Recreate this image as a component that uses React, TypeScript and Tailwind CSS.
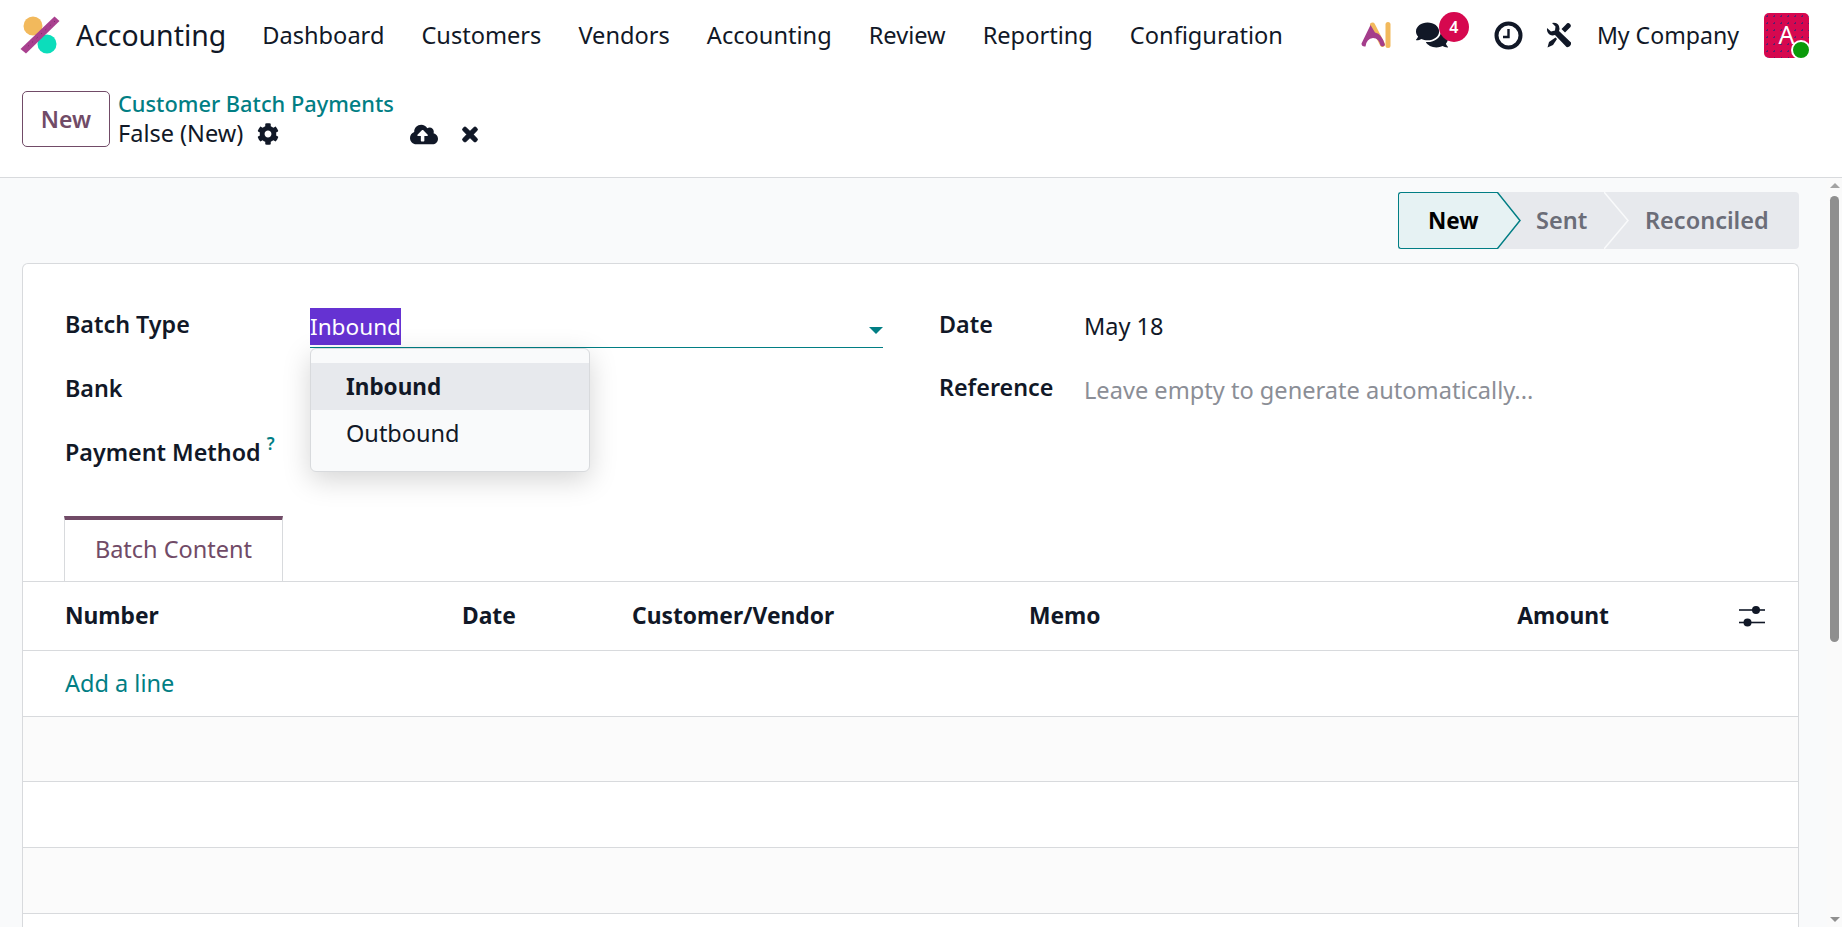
import { FaCog, FaCloudUploadAlt, FaTimes, FaComments } from "react-icons/fa";

const navItems = ["Dashboard", "Customers", "Vendors", "Accounting", "Review", "Reporting", "Configuration"];

const LogoIcon = () => (
  <svg width="40" height="38" viewBox="20 17 40 38" className="shrink-0">
    <circle cx="33" cy="27" r="9.5" fill="#f2b95c" />
    <circle cx="47" cy="45" r="9.5" fill="#0cddbb" />
    <polygon points="54.5,17.5 59.5,22 26,54.5 20.5,50" fill="#a9408f" />
    <line x1="55" y1="22" x2="25" y2="50" stroke="#5b2452" strokeWidth="0.8" strokeDasharray="1 5" />
  </svg>
);

const AiIcon = () => (
  <svg width="30" height="26" viewBox="0 0 30 26" className="shrink-0">
    <line x1="11.5" y1="3" x2="21.5" y2="22.5" stroke="#f2b95c" strokeWidth="5" strokeLinecap="round" />
    <line x1="27" y1="2.5" x2="27" y2="23.5" stroke="#f2b95c" strokeWidth="5" strokeLinecap="round" />
    <path d="M9.5 3 L0.5 21.5 Q0.5 25 4.5 24.5 Q5.5 16.5 12 16 Q18 16 19.5 23.5 Q22 25.5 24 23 Q21 12 14 10.5 Z" fill="#a43d8b" />
  </svg>
);

const ClockIcon = () => (
  <svg width="29" height="29" viewBox="0 0 29 29" className="shrink-0" fill="none" stroke="#111827">
    <circle cx="14.5" cy="14.5" r="12" strokeWidth="4" />
    <path d="M14.5 8 V16 H9" strokeWidth="2.4" />
  </svg>
);

const ToolsIcon = () => (
  <svg width="26" height="26" viewBox="0 0 26 26" className="shrink-0" fill="#111827">
    {/* wrench */}
    <path d="M1 6 L5 9.5 L9 8.5 L9.5 4.5 L6 1 Q11 0 13 4 Q14 7 13 9 L25 20.5 Q25.5 22 24 24 Q22.5 25.5 20.5 25 L9 13 Q6 14 3.5 12.5 Q0.5 10 1 6 Z" />
    {/* screwdriver */}
    <path d="M20 2.5 Q22 0 24 2 Q26 4 23.5 6 L19 10.5 L15.5 7 Z" />
    <path d="M9.5 15.5 L11 17 L7 23 L1.5 25.5 L3 20 Z" />
  </svg>
);

const SlidersIcon = () => (
  <svg width="26" height="22" viewBox="0 0 26 22" className="shrink-0" fill="#111827" stroke="#111827">
    <line x1="0" y1="5" x2="26" y2="5" strokeWidth="1.6" />
    <line x1="0" y1="17.5" x2="26" y2="17.5" strokeWidth="1.6" />
    <circle cx="17" cy="5" r="4" stroke="none" />
    <circle cx="8.5" cy="17.5" r="4" stroke="none" />
  </svg>
);

const Label = ({ children }: { children: React.ReactNode }) => (
  <span className="text-[23.3px] font-semibold text-[#111827]">{children}</span>
);

export default function App() {
  return (
    <div className="flex h-[927px] w-[1842px] flex-col overflow-hidden bg-white font-['Noto_Sans',sans-serif] text-[23.5px] text-[#111827]">
      {/* navbar */}
      <header className="flex h-[70px] shrink-0 items-center pl-[20px] pr-[33px]">
        <LogoIcon />
        <span className="ml-[16px] text-[28.4px] leading-none">Accounting</span>
        <nav className="ml-[36px] mt-[2px] flex gap-[37px] text-[23.6px]">
          {navItems.map((item) => (
            <span key={item}>{item}</span>
          ))}
        </nav>
        <div className="ml-auto flex items-center">
          <AiIcon />
          <div className="relative ml-[25px]">
            <FaComments className="h-[30px] w-[32px]" />
            <span className="absolute -right-[21px] -top-[8px] flex h-[30px] w-[30px] items-center justify-center rounded-full bg-[#d6084f] text-[16px] font-semibold text-white">
              4
            </span>
          </div>
          <div className="ml-[46px]">
            <ClockIcon />
          </div>
          <div className="ml-[23px]">
            <ToolsIcon />
          </div>
          <span className="ml-[25px] text-[23.1px]">My Company</span>
          <div className="relative ml-[25px] flex h-[45px] w-[45px] items-center justify-center rounded-[5px] bg-[#d6084f] bg-[radial-gradient(#5a1f6e_1px,transparent_1px)] bg-[size:7px_7px] text-[25px] text-white">
            A
            <span className="absolute -bottom-[2px] -right-[2px] h-[20px] w-[20px] rounded-full border-2 border-white bg-[#0a9a0a]" />
          </div>
        </div>
      </header>

      {/* control panel */}
      <div className="flex h-[108px] shrink-0 items-start border-b border-[#d8dadd] pl-[22px] pt-[21px]">
        <button className="h-[56px] w-[88px] rounded-[5px] border border-[#714b67] text-[23px] font-semibold text-[#714b67]">
          New
        </button>
        <div className="ml-[8px] -mt-[2px] flex flex-col">
          <span className="text-[21.8px] font-medium leading-[30px] text-[#017e84]">Customer Batch Payments</span>
          <div className="flex h-[30px] items-center">
            <span>False (New)</span>
            <FaCog className="ml-[14px] h-[22px] w-[22px]" />
            <FaCloudUploadAlt className="ml-[131px] h-[23px] w-[28px]" />
            <FaTimes className="ml-[22px] h-[21px] w-[20px]" stroke="currentColor" strokeWidth={30} />
          </div>
        </div>
      </div>

      {/* page body */}
      <div className="flex min-h-0 flex-1 bg-[#f9fafb]">
        <main className="flex min-w-0 flex-1 flex-col pl-[22px] pr-[28px] pt-[14px]">
          {/* status bar */}
          <div className="flex h-[57px] w-[401px] shrink-0 items-stretch self-end rounded-[4px] bg-[#e7e9ed]">
            <div className="flex w-[99px] items-center rounded-l-[3px] border-y border-l border-[#017e84] bg-[#e6f2f3] pl-[29px] text-[22.5px] font-bold text-black">
              New
            </div>
            <svg width="24" height="57" viewBox="0 0 24 57" className="shrink-0">
              <polygon points="0,0.5 0.5,0.5 23,28.5 0.5,56.5 0,56.5" fill="#e6f2f3" />
              <polyline points="0,0.5 0.5,0.5 23,28.5 0.5,56.5 0,56.5" fill="none" stroke="#017e84" strokeWidth="1.5" />
            </svg>
            <div className="flex w-[83px] items-center pl-[15px] text-[23.5px] font-semibold text-[#6b6d78]">Sent</div>
            <svg width="25" height="57" viewBox="0 0 25 57" className="shrink-0">
              <polyline points="0,0 24,28.5 0,57" fill="none" stroke="#f9fafb" strokeWidth="1.5" />
            </svg>
            <div className="flex flex-1 items-center pl-[16px] text-[23.5px] font-semibold text-[#6b6d78]">Reconciled</div>
          </div>

          {/* form sheet */}
          <section className="mt-[14px] flex min-h-0 flex-1 flex-col rounded-t-[6px] border border-b-0 border-[#d8dadd] bg-white">
            <div className="flex pl-[42px] pt-[28px]">
              <div className="w-[818px] shrink-0">
                <div className="flex h-[64px] items-center">
                  <div className="mt-[2px] w-[245px] shrink-0">
                    <Label>Batch Type</Label>
                  </div>
                  <div className="relative flex h-[48px] w-[573px] items-start border-b border-[#017e84] pt-[8px]">
                    <span className="flex h-[37px] items-center bg-[#6532d2] text-[22.6px] text-white">Inbound</span>
                    <span className="absolute right-0 top-[27px] h-0 w-0 border-x-[7px] border-t-[7px] border-x-transparent border-t-[#017e84]" />
                    {/* dropdown */}
                    <div className="absolute left-0 top-[calc(100%+1px)] z-10 w-[280px] rounded-[6px] border border-[#d8dadd] bg-[#f9fafb] py-[14px] shadow-[0_8px_28px_rgba(0,0,0,0.17)]">
                      <div className="flex h-[47px] items-center bg-[#e7e9ed] pl-[35px] text-[22.5px] font-bold">Inbound</div>
                      <div className="flex h-[47px] items-center pl-[35px]">Outbound</div>
                    </div>
                  </div>
                </div>
                <div className="flex h-[64px] items-center">
                  <Label>Bank</Label>
                </div>
                <div className="flex h-[64px] items-center">
                  <Label>Payment Method</Label>
                  <sup className="ml-[6px] text-[17px] font-semibold text-[#017e84]">?</sup>
                </div>
              </div>
              <div className="ml-[56px] flex-1">
                <div className="flex h-[64px] items-center">
                  <div className="mt-[2px] w-[145px] shrink-0">
                    <Label>Date</Label>
                  </div>
                  <span className="mt-[6px]">May 18</span>
                </div>
                <div className="flex h-[64px] items-center">
                  <div className="w-[145px] shrink-0">
                    <Label>Reference</Label>
                  </div>
                  <span className="mt-[6px] text-[23.6px] text-[#8b8e96]">Leave empty to generate automatically...</span>
                </div>
              </div>
            </div>

            {/* tab */}
            <div className="ml-[41px] mt-[32px] flex h-[65px] w-[219px] items-center justify-center border-x border-t-4 border-x-[#d8dadd] border-t-[#714b67] pb-[2px] text-[#714b67]">
              Batch Content
            </div>

            {/* table */}
            <div className="flex h-[70px] items-center border-y border-[#d8dadd] pl-[42px] pr-[33px] text-[22.8px] font-bold">
              <span className="w-[397px]">Number</span>
              <span className="w-[170px]">Date</span>
              <span className="w-[397px]">Customer/Vendor</span>
              <span>Memo</span>
              <span className="ml-auto mr-[130px]">Amount</span>
              <SlidersIcon />
            </div>
            <div className="flex h-[66px] items-center border-b border-[#d8dadd] pl-[42px] text-[#017e84]">
              Add a line
            </div>
            <div className="h-[65px] border-b border-[#d8dadd] bg-[#fbfbfb]" />
            <div className="h-[66px] border-b border-[#d8dadd]" />
            <div className="h-[66px] border-b border-[#d8dadd] bg-[#fbfbfb]" />
          </section>
        </main>

        {/* scrollbar */}
        <div className="relative flex w-[15px] shrink-0 flex-col items-center bg-[#fafafa] pt-[18px]">
          <span className="absolute top-[5px] h-0 w-0 border-x-[5px] border-b-[5px] border-x-transparent border-b-[#a3a3a3]" />
          <div className="h-[446px] w-[9px] rounded-[5px] bg-[#8f8f8f]" />
          <span className="absolute bottom-[5px] h-0 w-0 border-x-[5px] border-t-[5px] border-x-transparent border-t-[#8f8f8f]" />
        </div>
      </div>
    </div>
  );
}
